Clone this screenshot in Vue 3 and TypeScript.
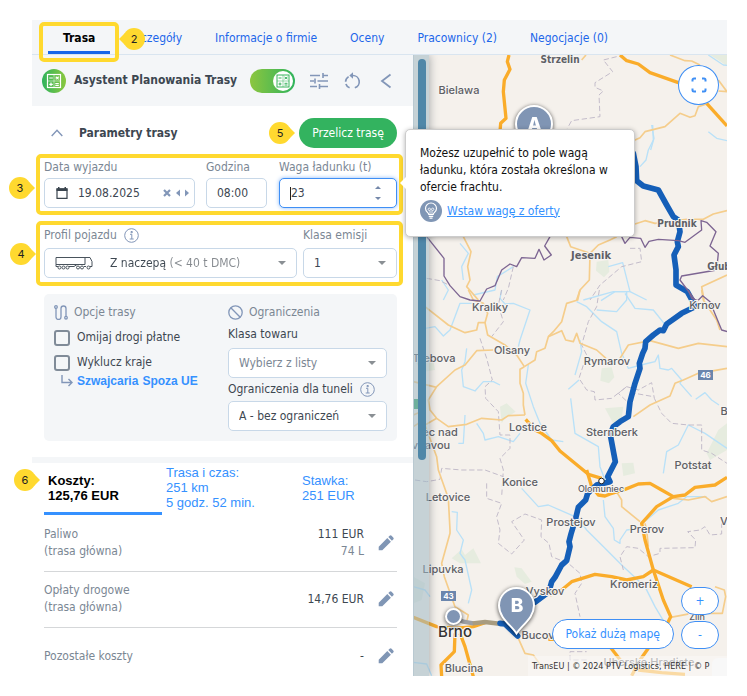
<script setup lang="ts">
import { ref } from 'vue'

interface Line { tile: 'a' | 'b' | 'c' | 'd'; points: string }
interface Place { name: string; x: number; y: number; size?: number; kind?: string }
interface Cost { name: string; note?: string; value: string; extra?: string }

const date = ref('19.08.2025')
const hour = ref('08:00')
const weight = ref('23')
const profile = ref('semi')
const emission = ref('1')
const goods = ref('')
const tunnels = ref('A')
const avoidTolls = ref(false)
const excludeCountries = ref(false)
const assistant = ref(true)

const tabs = ['Trasa', 'Szczegóły', 'Informacje o firmie', 'Oceny', 'Pracownicy (2)', 'Negocjacje (0)']

const costs: Cost[] = [
  { name: 'Paliwo', note: '(trasa główna)', value: '111 EUR', extra: '74 L' },
  { name: 'Opłaty drogowe', note: '(trasa główna)', value: '14,76 EUR' },
  { name: 'Pozostałe koszty', value: '-' },
]

// Map geometry is stored per tile, in tile units (three units per pixel).
const tileTransform = {
  a: 'translate(400 120) scale(.33333)',
  b: 'translate(480 10) scale(.33333)',
  c: 'translate(405 290) scale(.33333)',
  d: 'translate(405 480) scale(.33333)',
}

const forests: Line[] = [
  { tile: 'a', points: '590,425 625,420 628,455 612,472 588,452' },
  { tile: 'b', points: '690,135 741,135 741,168 715,150' },
  { tile: 'c', points: '590,235 620,232 628,262 612,280 586,272' },
  { tile: 'c', points: '285,350 305,340 332,365 300,385 290,400' },
  { tile: 'c', points: '600,355 655,350 650,385 630,410' },
  { tile: 'c', points: '650,520 685,518 690,550 655,558' },
  { tile: 'c', points: '940,420 966,400 966,480 915,510 905,490' },
  { tile: 'c', points: '30,215 85,210 90,240 55,245' },
  { tile: 'd', points: '140,235 170,208 180,225 205,205 228,250 165,250' },
  { tile: 'd', points: '328,262 350,265 380,305 360,312 335,290' },
  { tile: 'd', points: '25,290 60,310 50,360 25,370' },
]

const rivers: Line[] = [
  { tile: 'b', points: '685,135 730,165 741,166' },
  { tile: 'b', points: '685,365 710,385 741,392' },
  { tile: 'b', points: '515,345 522,385 512,420' },
  { tile: 'a', points: '180,370 205,400 185,440 190,480' },
  { tile: 'a', points: '220,525 285,510 292,470 340,440' },
  { tile: 'a', points: '125,480 145,510 130,540' },
  { tile: 'a', points: '625,440 668,428 690,515 640,515 550,540' },
  { tile: 'a', points: '690,515 740,540' },
  { tile: 'a', points: '758,15 760,60 745,90 738,120 720,140' },
  { tile: 'c', points: '290,0 285,25 300,42 325,40 375,60 345,150 340,170' },
  { tile: 'c', points: '60,115 90,110 115,138 135,120 165,40 200,40' },
  { tile: 'c', points: '185,175 180,215 170,240 175,290 210,303 235,275 265,275 285,285' },
  { tile: 'c', points: '370,225 362,280 385,350 405,400 440,450 475,455' },
  { tile: 'c', points: '497,325 510,430 580,470 585,530 600,570' },
  { tile: 'c', points: '515,35 545,50 590,95 635,125 650,190 670,235 720,222' },
  { tile: 'c', points: '588,32 630,5 665,5 665,30 635,65 575,60' },
  { tile: 'c', points: '660,10 690,55 745,60 785,110' },
  { tile: 'c', points: '525,150 530,185 510,255' },
  { tile: 'c', points: '490,298 522,270' },
  { tile: 'c', points: '720,222 750,215 760,195 765,235 790,240 800,235 830,270 825,280 860,320' },
  { tile: 'c', points: '872,328 900,308 920,330 942,345' },
  { tile: 'c', points: '775,550 785,485 820,465 850,405 900,430 966,475' },
  { tile: 'c', points: '215,400 235,430 240,450 280,440 325,455 345,430' },
  { tile: 'c', points: '180,375 175,460 160,460' },
  { tile: 'c', points: '350,595 400,650 430,645 515,682' },
  { tile: 'd', points: '520,115 545,150 600,205 650,255 720,320 750,380 780,430' },
  { tile: 'd', points: '595,60 600,110 625,145 628,180 645,190 645,180 665,150 705,145' },
  { tile: 'd', points: '140,95 157,97 155,150 175,180 165,220 180,240 200,330 190,370' },
  { tile: 'd', points: '722,122 760,90 820,70 845,50 905,50' },
  { tile: 'd', points: '25,320 60,330 75,350' },
  { tile: 'd', points: '25,547 65,552 80,587' },
]

const districts: Line[] = [
  { tile: 'b', points: '410,140 370,150 398,185 345,218 345,232 370,243 357,255 360,320 275,332 262,355' },
  { tile: 'a', points: '340,440 325,505 310,540' },
  { tile: 'a', points: '690,385 720,385 725,425 665,440 600,495 570,540' },
  { tile: 'a', points: '80,475 120,482 150,497' },
  { tile: 'c', points: '290,0 280,45 295,95 260,140' },
  { tile: 'c', points: '225,145 245,205 262,270 240,290 242,325 280,365 285,435 315,435 315,475 285,505 295,540 290,620' },
  { tile: 'c', points: '583,0 575,50 550,95 530,165 545,195 522,265 545,300 568,305 570,330 620,325 665,290 700,300 740,278 748,325' },
  { tile: 'c', points: '665,290 640,310 672,340 690,310 745,320' },
  { tile: 'c', points: '748,325 770,370 800,400 850,405 890,405 890,480 920,490 966,520' },
  { tile: 'c', points: '30,570 65,575 105,568 110,535 170,540 240,540 295,560' },
  { tile: 'd', points: '245,10 245,55 290,70 275,110 285,150 280,190 320,222 358,180 320,125 360,102 410,120 408,170 432,190 440,230 490,250 525,280 530,310 510,340 525,410' },
  { tile: 'd', points: '655,270 645,230 665,200 700,205 730,230 765,220 765,205 870,203 872,180 848,155 885,150 900,140 915,165 950,162 950,130' },
  { tile: 'd', points: '545,540 495,540 495,515 545,515' },
]

const minorRoads: Line[] = [
  { tile: 'b', points: '570,135 615,152 635,153 660,165' },
  { tile: 'b', points: '715,210 741,245 715,243' },
  { tile: 'b', points: '318,135 305,150' },
  { tile: 'b', points: '460,392 480,383 495,365 555,350 600,310 630,322 645,317 655,290 680,282' },
  { tile: 'a', points: '190,350 213,395 203,440 210,480 200,500 235,540' },
  { tile: 'a', points: '500,350 512,380 570,400 568,480 540,510 530,540' },
  { tile: 'a', points: '570,400 595,375 630,360 650,350' },
  { tile: 'a', points: '705,312 735,302 765,310 860,298 910,298 940,282 981,272' },
  { tile: 'a', points: '981,465 905,500 912,540' },
  { tile: 'c', points: '60,50 130,105 180,128 215,120 220,98 240,98 248,135 300,165 335,195 358,230' },
  { tile: 'c', points: '190,0 205,30 235,40 248,70 240,98' },
  { tile: 'c', points: '358,230 345,238 345,280 355,310 355,345 360,375' },
  { tile: 'c', points: '358,230 390,210 395,185 420,175 430,140 445,125 470,95 485,40 518,30 525,0' },
  { tile: 'c', points: '430,140 470,122 482,150 505,155 515,130 525,160 575,180 603,205' },
  { tile: 'c', points: '645,205 670,165 735,152 820,175 880,160 966,170' },
  { tile: 'c', points: '685,380 735,345 795,318 810,280 835,270 880,250 966,235' },
  { tile: 'c', points: '265,180 215,182 180,225 150,240 95,290 70,330 75,360 95,385 130,410 185,403 230,385 290,390 310,377 360,375' },
  { tile: 'c', points: '25,275 95,292' },
  { tile: 'c', points: '25,375 60,360 40,400 25,410' },
  { tile: 'c', points: '95,385 60,405 95,500 100,540 130,625 135,720' },
  { tile: 'c', points: '890,0 895,30 935,90 945,120' },
  { tile: 'd', points: '135,150 135,160 110,250 118,290 150,380 190,405 185,425' },
  { tile: 'd', points: '625,20 650,60 650,80 705,125' },
  { tile: 'd', points: '805,55 850,60 900,50 920,65 966,50' },
  { tile: 'd', points: '340,475 360,520 385,525 410,560' },
  { tile: 'd', points: '930,320 958,330 962,350 952,400 860,400 797,412' },
  { tile: 'd', points: '720,130 725,150 730,200' },
]

const mainRoads: Line[] = [
  { tile: 'b', points: '87,135 82,155 90,178 73,210 70,245 78,325 62,340 60,365' },
  { tile: 'b', points: '420,135 440,152 475,162 510,188 595,218' },
  { tile: 'b', points: '680,280 741,348' },
  { tile: 'c', points: '362,388 390,420 410,430 440,452 465,483 550,553 590,565' },
  { tile: 'd', points: '545,-30 560,20 580,45 600,48 615,42 660,28 700,12 735,10 770,30 805,50 840,45 870,22 930,15 966,-8' },
  { tile: 'd', points: '805,50 755,80 710,130 720,180 745,270 775,360 797,410 785,435' },
  { tile: 'd', points: '745,270 860,320' },
  { tile: 'd', points: '745,270 715,290 665,300 620,290 570,283 500,305 470,330 435,345' },
  { tile: 'd', points: '25,412 95,440 150,445 205,440 240,428' },
  { tile: 'd', points: '150,460 148,515 108,555 110,590' },
  { tile: 'd', points: '165,460 180,500 205,590' },
  { tile: 'd', points: '430,478 460,478' },
  { tile: 'd', points: '615,500 650,545' },
  { tile: 'd', points: '730,505 705,540 680,587' },
  { tile: 'd', points: '700,570 770,578 840,583' },
]

const borders: Line[] = [
  { tile: 'a', points: '80,350 132,415 132,468 150,497 180,530 210,540 240,543 260,507 285,497 305,450 330,432 350,440 365,413 405,415 417,388 432,420 454,405 434,378 450,350' },
  { tile: 'a', points: '665,350 675,370 690,352 722,355 735,382 747,364 775,358 835,362 855,367 905,330 903,302 920,307 948,335 930,378 955,400 950,450 845,468 840,480 885,540' },
  { tile: 'c', points: '850,0 860,25 878,32 893,17 915,35 950,120 967,125' },
]

const routes: Line[] = [
  { tile: 'a', points: '700,100 708,140 710,182 730,198 775,210 800,255 820,290 835,300 840,335 832,365 835,380 822,405 828,450 828,495 862,515 880,548 885,560 845,580 800,612 790,632 780,630 760,645 737,665 735,685 728,700 718,730 720,745 705,790 690,845 685,890 660,905 640,920 632,940' },
  { tile: 'c', points: '617,440 631,515 608,560 615,575 575,585 548,610 542,630 520,652 512,685 498,732 492,755 495,770 485,812 470,825 450,862 440,875 432,905 390,937' },
  { tile: 'd', points: '285,430 300,432 338,468' },
]

const places: Place[] = [
  { name: 'Strzelin', x: 560, y: 63, size: 10, kind: 'wide' },
  { name: 'Bielawa', x: 459, y: 94 },
  { name: 'Prudnik', x: 677, y: 227, size: 10, kind: 'wide' },
  { name: 'Jesenik', x: 591, y: 259, size: 11, kind: 'wide' },
  { name: 'Głub', x: 719, y: 270, size: 10, kind: 'wide' },
  { name: 'Kraliky', x: 490, y: 311 },
  { name: 'Krnov', x: 705, y: 309 },
  { name: 'Olsany', x: 512, y: 354 },
  { name: 'Trebova', x: 434, y: 362 },
  { name: 'Rymarov', x: 607, y: 365 },
  { name: 'Lostice', x: 528, y: 431 },
  { name: 'ec nad', x: 440, y: 436 },
  { name: 'vitavou', x: 431, y: 449 },
  { name: 'Sternberk', x: 612, y: 436 },
  { name: 'B', x: 724, y: 415 },
  { name: 'Potstat', x: 693, y: 469 },
  { name: 'Konice', x: 520, y: 486 },
  { name: 'Olomuniec', x: 601, y: 492, size: 9 },
  { name: 'Letovice', x: 448, y: 501 },
  { name: 'Prostejov', x: 571, y: 526 },
  { name: 'Prerov', x: 647, y: 533 },
  { name: 'V', x: 724, y: 525 },
  { name: 'Lipuvka', x: 443, y: 573 },
  { name: 'Vyskov', x: 545, y: 595 },
  { name: 'Kromeriz', x: 634, y: 588 },
  { name: 'Zlin', x: 697, y: 620, size: 9 },
  { name: 'Brno', x: 455, y: 637, size: 15, kind: 'city' },
  { name: 'Bucov', x: 538, y: 639 },
  { name: 'Blucina', x: 464, y: 672 },
  { name: 'Uherske Hradiste', x: 649, y: 666 },
]
</script>

<template>
  <main class="page">
    <nav class="tabs" aria-label="Oferta">
      <a v-for="(tab, i) in tabs" :key="tab" href="#" class="tab" :class="{ active: i === 0 }">{{ tab }}</a>
      <span class="frame frame-tab"></span>
      <span class="badge left badge-2">2</span>
    </nav>

    <div class="body">
      <section class="panel">
        <header class="assistant">
          <svg class="logo" viewBox="0 0 24 24" aria-hidden="true">
            <defs>
              <linearGradient id="brand" x1="0" x2="1"><stop offset="0" stop-color="#2fb35c" /><stop offset="1" stop-color="#8bc83f" /></linearGradient>
            </defs>
            <circle cx="12" cy="12" r="12" fill="url(#brand)" />
            <g fill="none" stroke="#fff" stroke-width="1.2">
              <rect x="5.5" y="5.5" width="13" height="13" />
              <path d="M7.300 9h3.500M13.700 7.700l3 2.600M16.700 7.700l-3 2.600M7.300 15.300h3.500M9 13.500v3.500M13.300 14.500h3.500M13.300 16.300h3.500" />
              <path d="M12 5.500v13M5.500 12h13" stroke-width=".5" />
            </g>
          </svg>
          <h1>Asystent Planowania Trasy</h1>
          <label class="toggle" aria-label="Asystent">
            <input v-model="assistant" type="checkbox" />
            <span class="knob">
              <svg viewBox="0 0 18 18" fill="none" stroke="#36b35a" stroke-width="1">
                <rect x="3" y="3" width="12" height="12" />
                <path d="M4.500 6h3M10.500 5l3 2M13.500 5l-3 2M4.500 12h3M6 10.500v3M10.500 11.300h3M10.500 13h3" />
                <path d="M9 3v12M3 9h12" stroke-width=".5" />
              </svg>
            </span>
          </label>
          <button class="icon" aria-label="Ustawienia">
            <svg viewBox="0 0 18 16" width="18" height="16" fill="none" stroke="#8296b8" stroke-width="1.600">
              <path d="M0 2.500h10M13 2.500h5M13 0v5M0 8h4M7.500 8h10.500M5 5.500v5M0 13.500h7M10 13.500h8M9.500 11v5" />
            </svg>
          </button>
          <button class="icon" aria-label="Odśwież">
            <svg viewBox="0 0 18 18" width="18" height="18" fill="none" stroke="#8296b8" stroke-width="1.700">
              <path d="M8 3.500h1.500a6.300 6.300 0 0 1 2.300 12.300M6.600 15.800a6.300 6.300 0 0 1-3.700-3.900M2.600 9.800a6.300 6.300 0 0 1 3-5.200" />
              <path d="M10 .300L6.300 3.500L10 6.700z" fill="#8296b8" stroke="none" />
            </svg>
          </button>
          <button class="icon last" aria-label="Zwiń">
            <svg viewBox="0 0 12 16" width="12" height="16" fill="none" stroke="#8296b8" stroke-width="1.800"><path d="M10.500 1.500L2 8l8.500 6.500" /></svg>
          </button>
        </header>

        <div class="params-head">
          <svg viewBox="0 0 12 8" width="12" height="8" fill="none" stroke="#8296b8" stroke-width="1.400" aria-hidden="true"><path d="M.700 7L6 1.200L11.300 7" /></svg>
          <h2>Parametry trasy</h2>
          <span class="badge right">5</span>
          <button class="primary">Przelicz trasę</button>
        </div>

        <div class="fields framed">
          <div class="field date">
            <label for="date">Data wyjazdu</label>
            <div class="control">
              <svg viewBox="0 0 12 12" width="12" height="12" aria-hidden="true"><path d="M1 2h10v9.300H1z" fill="none" stroke="#3a444e" stroke-width="1.200" /><path d="M.500 1.300h11v2.700H.500zM2 0h1.500v2H2zM8.500 0H10v2H8.500z" fill="#3a444e" /></svg>
              <input id="date" v-model="date" type="text" />
              <button aria-label="Wyczyść"><svg viewBox="0 0 8 8" width="8" height="8"><path d="M1 1l6 6M7 1l-6 6" stroke="#8296b8" stroke-width="2.200" /></svg></button>
              <button aria-label="Poprzedni dzień"><svg viewBox="0 0 4 8" width="4" height="8"><path d="M4 .500v7L0 4z" fill="#8296b8" /></svg></button>
              <button aria-label="Następny dzień"><svg viewBox="0 0 4 8" width="4" height="8"><path d="M0 .500v7l4-3.500z" fill="#8296b8" /></svg></button>
            </div>
          </div>
          <div class="field hour">
            <label for="hour">Godzina</label>
            <div class="control"><input id="hour" v-model="hour" type="text" /></div>
          </div>
          <div class="field weight">
            <label for="weight">Waga ładunku (t)</label>
            <div class="control focused">
              <span class="caret"></span>
              <input id="weight" v-model="weight" type="text" />
              <span class="steps">
                <button aria-label="Więcej"><svg viewBox="0 0 6 3" width="6" height="3"><path d="M0 3h6L3 0z" fill="#7488aa" /></svg></button>
                <button aria-label="Mniej"><svg viewBox="0 0 6 3" width="6" height="3"><path d="M0 0h6L3 3z" fill="#7488aa" /></svg></button>
              </span>
            </div>
          </div>
          <span class="frame frame-dates"></span>
          <span class="badge right outer">3</span>

          <div class="tip" role="tooltip">
            <p>Możesz uzupełnić to pole wagą ładunku, która została określona w ofercie frachtu.</p>
            <div class="tip-link">
              <svg viewBox="0 0 22 22" width="22" height="22" aria-hidden="true">
                <circle cx="11" cy="11" r="11" fill="#8096b5" />
                <g fill="none" stroke="#fff" stroke-width="1.200">
                  <path d="M8.800 14.500c0-1.800-3.300-2.800-3.300-6a5.500 5.500 0 0 1 11 0c0 3.200-3.300 4.200-3.300 6z" />
                  <path d="M10 14V10.500M12 14V10.500" stroke-width=".8" />
                  <circle cx="9.300" cy="9.300" r="1.200" stroke-width=".8" />
                  <circle cx="12.700" cy="9.300" r="1.200" stroke-width=".8" />
                  <path d="M8.800 16.300h4.400M9.500 18.200h3" />
                </g>
              </svg>
              <a href="#">Wstaw wagę z oferty</a>
            </div>
          </div>
        </div>

        <div class="fields framed second">
          <div class="field profile">
            <label for="profile">Profil pojazdu
              <svg class="info" viewBox="0 0 15 15" width="15" height="15" aria-hidden="true"><circle cx="7.500" cy="7.500" r="6.800" /><path d="M6 6.300h1.800V11M5.700 11h4M7 3.500h1.300v1.200H7z" /></svg>
            </label>
            <div class="control">
              <svg viewBox="0 0 38 14" width="38" height="14" fill="none" stroke="#49535c" aria-hidden="true">
                <path d="M1 1.500h29v7H1zM1 8.500v2h2M14 10.500h5l3-2M30 1.500h5l2 4v5h-2M29 10.500h2" />
                <circle cx="4.500" cy="11.500" r="1.500" /><circle cx="8.500" cy="11.500" r="1.500" /><circle cx="12.500" cy="11.500" r="1.500" /><circle cx="23" cy="11.500" r="1.500" /><circle cx="27" cy="11.500" r="1.500" /><circle cx="33.500" cy="11.500" r="1.500" />
              </svg>
              <select id="profile" v-model="profile" class="two-tone">
                <option value="semi">Z naczepą (&lt; 40 t DMC)</option>
              </select>
              <svg class="arrow" viewBox="0 0 8 4" width="8" height="4" aria-hidden="true"><path d="M0 0h8L4 4z" /></svg>
            </div>
          </div>
          <div class="field emission">
            <label for="emission">Klasa emisji</label>
            <div class="control">
              <select id="emission" v-model="emission"><option>1</option></select>
              <svg class="arrow" viewBox="0 0 8 4" width="8" height="4" aria-hidden="true"><path d="M0 0h8L4 4z" /></svg>
            </div>
          </div>
          <span class="frame frame-profile"></span>
          <span class="badge right outer">4</span>
        </div>

        <div class="options">
          <fieldset class="route-options">
            <h3>
              <svg viewBox="0 0 14 15" width="14" height="15" fill="none" stroke="#8296b8" stroke-width="1.300" aria-hidden="true"><circle cx="2" cy="2" r="1.300" /><circle cx="12" cy="12.700" r="1.300" /><path d="M2 3.500v8.500a2.500 2.500 0 0 0 5 0V3.500a2.500 2.500 0 0 1 5 0v7.800" /></svg>
              Opcje trasy
            </h3>
            <label class="check"><input v-model="avoidTolls" type="checkbox" />Omijaj drogi płatne</label>
            <label class="check"><input v-model="excludeCountries" type="checkbox" />Wyklucz kraje</label>
            <div class="countries">
              <svg viewBox="0 0 12 12" width="12" height="12" fill="none" stroke="#8296b8" stroke-width="1.400" aria-hidden="true"><path d="M1 0v7.500h9.500M7.500 4l3.500 3.500L7.500 11" /></svg>
              <a href="#">Szwajcaria</a>
              <a href="#">Spoza UE</a>
            </div>
          </fieldset>
          <fieldset class="limits">
            <h3>
              <svg viewBox="0 0 15 15" width="15" height="15" fill="none" stroke="#8296b8" stroke-width="1.300" aria-hidden="true"><circle cx="7.500" cy="7.500" r="6.700" /><path d="M2.800 2.800l9.400 9.400" /></svg>
              Ograniczenia
            </h3>
            <label class="dark" for="goods">Klasa towaru</label>
            <div class="control">
              <select id="goods" v-model="goods" class="muted"><option value="">Wybierz z listy</option></select>
              <svg class="arrow" viewBox="0 0 8 4" width="8" height="4" aria-hidden="true"><path d="M0 0h8L4 4z" /></svg>
            </div>
            <label class="dark" for="tunnels">Ograniczenia dla tuneli
              <svg class="info" viewBox="0 0 15 15" width="15" height="15" aria-hidden="true"><circle cx="7.500" cy="7.500" r="6.800" /><path d="M6 6.300h1.800V11M5.700 11h4M7 3.500h1.300v1.200H7z" /></svg>
            </label>
            <div class="control">
              <select id="tunnels" v-model="tunnels"><option value="A">A - bez ograniczeń</option></select>
              <svg class="arrow" viewBox="0 0 8 4" width="8" height="4" aria-hidden="true"><path d="M0 0h8L4 4z" /></svg>
            </div>
          </fieldset>
        </div>

        <div class="summary">
          <button class="active">Koszty:<br />125,76 EUR</button>
          <button>Trasa i czas:<br />251 km<br />5 godz. 52 min.</button>
          <button>Stawka:<br />251 EUR</button>
          <span class="badge right badge-6">6</span>
        </div>

        <table class="costs">
          <tbody>
            <tr v-for="cost in costs" :key="cost.name">
              <th scope="row">{{ cost.name }}<template v-if="cost.note"><br />{{ cost.note }}</template></th>
              <td class="value">{{ cost.value }}<template v-if="cost.extra"><br /><span>{{ cost.extra }}</span></template></td>
              <td class="edit">
                <button class="icon" aria-label="Edytuj">
                  <svg viewBox="0 0 16 16" width="16" height="16" fill="#8096b5"><path d="M.700 15.300v-3.600l8.600-8.600 3.600 3.600-8.600 8.600zM10.300 2.100l1.300-1.300a1.400 1.400 0 0 1 2 0l1.600 1.600a1.400 1.400 0 0 1 0 2l-1.300 1.300z" /></svg>
                </button>
              </td>
            </tr>
          </tbody>
        </table>
      </section>

      <section class="map" aria-label="Mapa">
        <svg class="canvas" viewBox="413 55 314 621" preserveAspectRatio="xMinYMin slice">
          <rect x="0" y="0" width="2000" height="2000" fill="#f5f1ec" />
          <polygon v-for="(l, i) in forests" :key="'f' + i" class="forest" :transform="tileTransform[l.tile]" :points="l.points" />
          <polyline v-for="(l, i) in rivers" :key="'r' + i" class="river" :transform="tileTransform[l.tile]" :points="l.points" />
          <polyline v-for="(l, i) in districts" :key="'d' + i" class="district" :transform="tileTransform[l.tile]" :points="l.points" />
          <polyline v-for="(l, i) in minorRoads" :key="'m' + i" class="minor" :transform="tileTransform[l.tile]" :points="l.points" />
          <polyline v-for="(l, i) in mainRoads" :key="'o' + i" class="main" :transform="tileTransform[l.tile]" :points="l.points" />
          <g :transform="tileTransform.d" fill="none" stroke-width="13">
            <path d="M145 412L175 425L205 430" stroke="#9c9fa3" />
            <path d="M203 430L240 426L290 432" stroke="#a89c80" />
          </g>
          <polyline v-for="(l, i) in routes" :key="'t' + i" class="route" :transform="tileTransform[l.tile]" :points="l.points" />
          <polyline v-for="(l, i) in borders" :key="'b' + i" class="border" :transform="tileTransform[l.tile]" :points="l.points" />
          <text v-for="p in places" :key="p.name" :x="p.x" :y="p.y" :font-size="p.size ?? 11" class="place" :class="p.kind">{{ p.name }}</text>
          <g class="shield">
            <rect x="698" y="370" width="15" height="10" fill="#6b86ad" /><text x="705.500" y="378">46</text>
            <rect x="441" y="591" width="15" height="10" fill="#6b86ad" /><text x="448.500" y="599">43</text>
            <rect x="411" y="399" width="15" height="10" fill="#35a66e" />
          </g>
          <circle cx="601.500" cy="481" r="2.800" fill="#fff" stroke="#222" />
          <circle cx="453.500" cy="616.500" r="7.500" fill="#8095b4" stroke="#fff" stroke-width="2" class="shadow" />
          <g class="shadow">
            <circle cx="534" cy="124" r="18" fill="#8095b4" stroke="#fff" stroke-width="2" />
            <text x="534.500" y="131" class="pin">A</text>
          </g>
          <g class="shadow">
            <path d="M516.500 633.500C511 625 499 618 499 605.500A17.500 17.500 0 0 1 534 605.500C534 618 522 625 516.500 633.500z" fill="#8095b4" stroke="#fff" stroke-width="2" />
            <text x="517" y="612" class="pin">B</text>
          </g>
        </svg>
        <div class="strip"><span class="thumb"></span></div>
        <button class="expand" aria-label="Pełny ekran">
          <svg viewBox="0 0 16 16" width="16" height="16" fill="none" stroke="#3f8ff5" stroke-width="2"><path d="M1.500 4.500V3A1.500 1.500 0 0 1 3 1.500H5M11 1.500h2A1.500 1.500 0 0 1 14.500 3V4.500M14.500 11.500V13a1.500 1.500 0 0 1-1.500 1.500H11M5 14.500H3A1.500 1.500 0 0 1 1.500 13V11.500" /></svg>
        </button>
        <div class="map-actions">
          <button class="pill">Pokaż dużą mapę</button>
          <div class="zoom">
            <button class="pill" aria-label="Przybliż">+</button>
            <button class="pill" aria-label="Oddal">-</button>
          </div>
        </div>
        <p class="credits">TransEU | © 2024 PTV Logistics, HERE | © P</p>
        <span class="corner"></span>
      </section>
    </div>
  </main>
</template>

<style>
body {
  background: #fff;
}
</style>

<style scoped>
.page,
.page * {
  box-sizing: border-box;
}
.page {
  display: flex;
  flex-direction: column;
  min-height: 100vh;
  padding: 20px 20px 20px 32px;
  font-family: "DejaVu Sans Condensed", "Noto Sans", sans-serif;
  font-size: 12px;
  line-height: 17px;
  color: #3d4751;
}
h1, h2, h3, p, fieldset {
  margin: 0;
  padding: 0;
  border: 0;
  font-size: 12px;
}
button {
  padding: 0;
  border: 0;
  background: none;
  font: inherit;
  cursor: pointer;
}
svg {
  display: block;
  flex: none;
}

.tabs {
  position: relative;
  display: flex;
  gap: 3px;
  height: 35px;
  padding-left: 16px;
  background: #f4f6f8;
  border-bottom: 1px solid #d9e5f0;
}
.tab {
  display: flex;
  align-items: center;
  padding: 6px 15px 0;
  border-bottom: 3px solid transparent;
  color: #1d66ea;
  text-decoration: none;
  white-space: nowrap;
}
.tab.active {
  border-color: #1766e8;
  color: #000;
  font-weight: bold;
}

.frame {
  position: absolute;
  z-index: 2;
  border: 4px solid #ffd92f;
  border-radius: 5px;
  pointer-events: none;
}
.frame-tab {
  left: 7px;
  top: 2px;
  width: 80px;
  height: 40px;
}
.frame-dates {
  inset: -4px -6px -7px -8px;
}
.frame-profile {
  inset: -4px -6px -8px -8px;
}
.badge {
  position: relative;
  z-index: 3;
  display: flex;
  align-items: center;
  justify-content: center;
  width: 22px;
  height: 22px;
  border-radius: 11px;
  background: #ffd92f;
  color: #222;
  font-family: Inter, sans-serif;
  font-size: 11px;
}
.badge::after {
  content: "";
  position: absolute;
  top: 5px;
  border: 6px solid transparent;
}
.badge.right::after {
  left: 20px;
  border-left-color: #ffd92f;
  border-right: 0;
}
.badge.left::after {
  right: 20px;
  border-right-color: #ffd92f;
  border-left: 0;
}
.badge-2 {
  position: absolute;
  left: 91px;
  top: 8px;
}
.badge.outer {
  position: absolute;
  left: -35px;
  top: 19px;
}

.body {
  flex: 1;
  display: grid;
  grid-template-columns: 381px minmax(0, 1fr);
}
.panel {
  display: flex;
  flex-direction: column;
}
.assistant {
  display: flex;
  align-items: center;
  height: 51px;
  padding: 0 21px 0 10px;
  background: #f4f6f8;
}
.logo {
  width: 24px;
  height: 24px;
  margin-right: 8px;
}
.assistant h1 {
  white-space: nowrap;
}
.toggle {
  position: relative;
  width: 45px;
  height: 24px;
  margin-left: auto;
  border-radius: 12px;
  background: linear-gradient(90deg, #8cc63f, #2fb35c);
}
.toggle input {
  position: absolute;
  inset: 0;
  margin: 0;
  opacity: 0;
}
.knob {
  position: absolute;
  right: 2px;
  top: 2px;
  width: 20px;
  height: 20px;
  padding: 1px;
  border-radius: 10px;
  background: #fff;
}
.icon {
  display: flex;
  align-items: center;
  justify-content: center;
}
.assistant .icon {
  margin-left: 15px;
}
.assistant .icon.last {
  margin-left: 19px;
}

.params-head {
  display: flex;
  align-items: center;
  gap: 16px;
  padding: 12px 16px 10px 19px;
}
.params-head h2 {
  flex: 1;
}
.params-head .badge {
  margin-right: -8px;
}
.primary {
  width: 98px;
  height: 30px;
  border-radius: 15px;
  background: #33b35f;
  color: #fff;
}

.fields {
  position: relative;
  display: flex;
  margin: 0 16px 0 12px;
}
.fields.second {
  margin-top: 17px;
}
.second .badge {
  top: 18px;
  left: -34px;
}
.field label {
  display: flex;
  align-items: center;
  gap: 7px;
  height: 20px;
  padding-bottom: 2px;
  color: #7b8794;
  white-space: nowrap;
}
.second .field label {
  height: 23px;
}
.date {
  flex: 151;
  margin-right: 11px;
}
.hour {
  flex: 61;
  margin-right: 12px;
}
.weight {
  flex: 118;
}
.profile {
  flex: 253;
  margin-right: 6px;
}
.emission {
  flex: 94;
}
.field {
  min-width: 0;
}
.control {
  display: flex;
  align-items: center;
  height: 30px;
  padding: 0 10px;
  border: 1px solid #c8d8e8;
  border-radius: 5px;
  background: #fff;
}
.control.focused {
  border-color: #3f8ff5;
  box-shadow: 0 0 4px #8fbcf8;
}
input,
select {
  font: inherit;
  color: inherit;
}
.control input,
.control select {
  flex: 1;
  width: 0;
  min-width: 0;
  height: 28px;
  padding: 0;
  border: 0;
  outline: 0;
  background: none;
  appearance: none;
}
.date .control {
  gap: 5px;
  padding: 0 5px 0 11px;
}
.date input {
  padding-left: 5px;
}
.caret {
  width: 1px;
  height: 13px;
  background: #222;
}
.steps {
  display: flex;
  flex-direction: column;
  gap: 8px;
  margin-right: 5px;
}
.control .arrow {
  fill: #8a8f94;
}
.control select.two-tone {
  margin-left: 17px;
  background: linear-gradient(90deg, #3d4751 60px, #84898e 60px);
  background-clip: text;
  color: transparent;
}
.control select.muted {
  color: #7b8794;
}
.info {
  fill: none;
  stroke: #8296b8;
  stroke-width: 1;
}

.tip {
  position: absolute;
  z-index: 5;
  left: 361px;
  top: -29px;
  width: 230px;
  height: 108px;
  padding: 15px 14px;
  border: 1px solid #ccc;
  border-radius: 5px;
  background: #fff;
  box-shadow: 0 1px 5px rgba(0, 0, 0, 0.3);
  color: #111;
}
.tip::before {
  content: "";
  position: absolute;
  left: -6px;
  top: 47px;
  border: 6px solid transparent;
  border-right-color: #fff;
  border-left: 0;
}
.tip-link {
  display: flex;
  align-items: center;
  gap: 5px;
  margin-top: 4px;
}
.tip-link a {
  color: #3591ff;
}

.options {
  display: flex;
  margin: 16px 16px 0 12px;
  padding: 9px 10px 10px;
  border-radius: 5px;
  background: #f4f6f8;
}
.route-options {
  flex: 174;
  min-width: 0;
}
.limits {
  flex: 159;
  min-width: 0;
}
.options h3 {
  display: flex;
  align-items: center;
  gap: 6px;
  height: 18px;
  color: #7b8794;
  font-weight: normal;
}
.check {
  display: flex;
  align-items: center;
  gap: 7px;
  height: 17px;
  margin: 8px 0;
  white-space: nowrap;
}
.check input {
  width: 16px;
  height: 16px;
  margin: 0;
  border: 2px solid #808b98;
  border-radius: 3px;
  background: #f4f6f8;
  appearance: none;
}
.countries {
  display: flex;
  align-items: center;
  gap: 4px;
  margin: -6px 0 0 7px;
  font: bold 12px/16px "Liberation Sans", sans-serif;
  white-space: nowrap;
}
.countries a {
  color: #3591ff;
  text-decoration: none;
}
.dark {
  display: flex;
  align-items: center;
  gap: 7px;
  height: 23px;
  white-space: nowrap;
}
h3 + .dark {
  height: 27px;
}

.summary {
  position: relative;
  display: grid;
  grid-template-columns: 118px 136px 1fr;
  height: 58px;
  margin-top: 16px;
  padding: 0 12px;
  border-top: 6px solid #f4f6f8;
  font: 13px/15px "Liberation Sans", sans-serif;
}
.summary button {
  padding: 0 4px;
  border-bottom: 3px solid transparent;
  color: #3591ff;
  text-align: left;
  white-space: nowrap;
}
.summary button.active {
  border-color: #3591ff;
  color: #000;
  font-weight: bold;
}
.badge-6 {
  position: absolute;
  left: -18px;
  top: 6px;
}

.costs {
  margin: 0 16px 0 12px;
  border-collapse: collapse;
}
.costs tr {
  height: 56px;
  border-bottom: 1px solid #d5d7d9;
}
.costs th,
.costs td {
  padding: 0;
  font-weight: normal;
}
.costs tr:last-child {
  height: auto;
  border: 0;
}
.costs tr:last-child > * {
  padding-top: 20px;
  padding-bottom: 10px;
}
.costs th {
  color: #7b8794;
  text-align: left;
}
.costs .value {
  text-align: right;
}
.costs .value span {
  color: #7b8794;
}
.costs .edit {
  width: 33px;
  padding-left: 14px;
}

.map {
  position: relative;
  overflow: hidden;
}
.canvas {
  position: absolute;
  width: 100%;
  height: 100%;
}
.canvas polyline {
  fill: none;
  stroke-linejoin: round;
}
.forest { fill: #e6ecdf; }
.river { stroke: #b9e1f8; stroke-width: 4; }
.district { stroke: #c3bcca; stroke-width: 3; stroke-dasharray: 16 8; }
.minor { stroke: #f5cd8b; stroke-width: 5; }
.main { stroke: #faac2a; stroke-width: 10; }
.border { stroke: #7d6592; stroke-width: 4; }
.route { stroke: #155fb8; stroke-width: 17; stroke-linecap: round; }
.place {
  fill: #5e6065;
  stroke: #f7f5f2;
  stroke-width: 2px;
  paint-order: stroke;
  font-family: Inter, sans-serif;
  font-weight: 500;
  text-anchor: middle;
}
.place.wide {
  font-family: "DejaVu Sans Condensed", sans-serif;
  font-weight: bold;
}
.place.city {
  fill: #333;
}
.shield text {
  fill: #fff;
  font: bold 8px Inter, sans-serif;
  text-anchor: middle;
}
.pin {
  fill: #fff;
  font: 800 19px Inter, sans-serif;
  text-anchor: middle;
}
.shadow {
  filter: drop-shadow(0 1px 2px rgba(0, 0, 0, 0.7));
}
.strip {
  position: absolute;
  inset: 0 auto 0 0;
  width: 16px;
  padding: 4px 4px 0;
  background: rgba(158, 184, 196, 0.55);
  border-left: 1px solid #b9c9d1;
  box-shadow: 0 0 10px rgba(70, 80, 90, 0.5);
}
.thumb {
  display: block;
  width: 8px;
  height: 65%;
  border-radius: 4px;
  background: #4f87a8;
}
.expand {
  position: absolute;
  top: 10px;
  right: 8px;
  display: flex;
  align-items: center;
  justify-content: center;
  width: 41px;
  height: 40px;
  border: 1px solid #3f8ff5;
  border-radius: 50%;
  background: #fff;
}
.map-actions {
  position: absolute;
  right: 8px;
  bottom: 27px;
  display: flex;
  align-items: flex-end;
  gap: 7px;
}
.pill {
  height: 30px;
  padding: 0 13px;
  border: 1px solid #3f8ff5;
  border-radius: 15px;
  background: #fff;
  color: #3591ff;
  white-space: nowrap;
}
.zoom {
  display: flex;
  flex-direction: column;
  gap: 6px;
}
.zoom .pill {
  width: 38px;
  height: 28px;
}
.credits {
  position: absolute;
  right: 0;
  bottom: 0;
  left: 115px;
  height: 20px;
  padding: 0 4px;
  overflow: hidden;
  background: rgba(250, 248, 246, 0.6);
  color: #333;
  font-size: 9px;
  line-height: 20px;
  white-space: nowrap;
}
.corner {
  position: absolute;
  right: 0;
  bottom: 0;
  width: 15px;
  height: 18px;
  border-top-left-radius: 6px;
  background: #f8f8f8;
}
</style>
